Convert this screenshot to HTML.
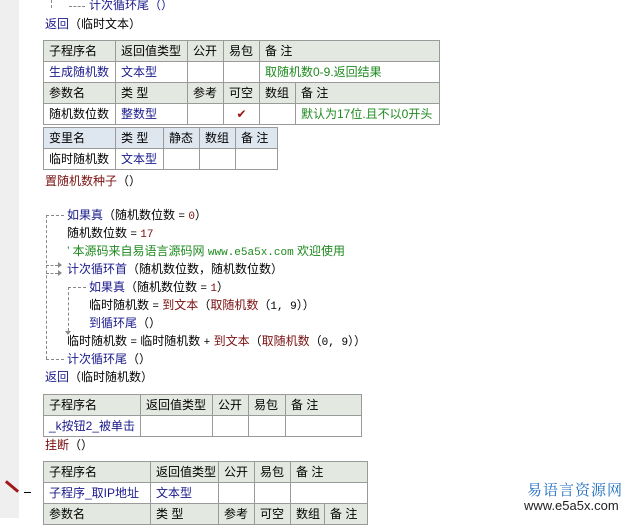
<!DOCTYPE html>
<html><head><meta charset="utf-8"><style>
body{margin:0;width:643px;height:518px;overflow:hidden;background:#fff;position:relative;font-family:"Liberation Sans","Noto Sans CJK SC",sans-serif;font-size:12px;color:#000}
.g{position:absolute;left:0;top:0;width:19px;height:518px;background:#efefef}
.t{position:absolute;white-space:nowrap;line-height:18px}
table{position:absolute;border-collapse:collapse;table-layout:fixed}
td{border:1px solid #9a9a9a;height:20px;padding:0 0 0 5px;white-space:nowrap;overflow:hidden;line-height:19px}
tr.h td{background:#e3e8e0}
tr.v td{background:#dee6ef}
.b{color:#1a1a8c}.gr{color:#1e8a1e}.r{color:#7a1010}.m{font-family:"Liberation Mono",monospace;font-size:11px}
.dv{position:absolute;border-left:1px dashed #888}
.dh{position:absolute;border-top:1px dashed #888}
</style></head><body>
<div class="g"></div>
<div class="dv" style="left:51px;top:0;height:8px"></div>
<div class="dh" style="left:69px;top:6px;width:16px"></div>
<div class="t b" style="left:89px;top:-4px">计次循环尾（）</div>
<div class="t" style="left:45px;top:15px"><span class="b">返回</span>（临时文本）</div>

<table style="left:43px;top:40px;width:397px">
<colgroup><col style="width:72px"><col style="width:72px"><col style="width:36px"><col style="width:36px"><col style="width:36px"><col></colgroup>
<tr class="h"><td>子程序名</td><td>返回值类型</td><td>公开</td><td>易包</td><td colspan="2">备 注</td></tr>
<tr><td class="b">生成随机数</td><td class="b">文本型</td><td></td><td></td><td colspan="2" class="gr">取随机数0-9.返回结果</td></tr>
<tr class="h"><td>参数名</td><td>类 型</td><td>参考</td><td>可空</td><td>数组</td><td>备 注</td></tr>
<tr><td>随机数位数</td><td class="b">整数型</td><td></td><td style="color:#a01010;text-align:center;padding:0">✔</td><td></td><td class="gr">默认为17位.且不以0开头</td></tr>
</table>

<table style="left:43px;top:127px;width:235px">
<colgroup><col style="width:72px"><col style="width:48px"><col style="width:36px"><col style="width:36px"><col></colgroup>
<tr class="v"><td>变里名</td><td>类 型</td><td>静态</td><td>数组</td><td>备 注</td></tr>
<tr><td>临时随机数</td><td class="b">文本型</td><td></td><td></td><td></td></tr>
</table>
<div class="t r" style="left:45px;top:172px">置随机数种子<span style="color:#000">（）</span></div>

<div class="dv" style="left:46px;top:215px;height:144px"></div>
<div class="dh" style="left:46px;top:215px;width:18px"></div>
<div class="dh" style="left:46px;top:359px;width:18px"></div>
<div class="dh" style="left:46px;top:265px;width:12px"></div>
<div class="dh" style="left:46px;top:273px;width:12px"></div>
<div style="position:absolute;left:58px;top:262px;border-left:4px solid #888;border-top:3px solid transparent;border-bottom:3px solid transparent"></div>
<div style="position:absolute;left:58px;top:270px;border-left:4px solid #888;border-top:3px solid transparent;border-bottom:3px solid transparent"></div>
<div class="dv" style="left:68px;top:287px;height:44px"></div>
<div class="dh" style="left:68px;top:287px;width:18px"></div>
<div style="position:absolute;left:65px;top:331px;border-top:4px solid #888;border-left:3px solid transparent;border-right:3px solid transparent"></div>

<div class="t" style="left:67px;top:206px"><span class="b">如果真</span>（随机数位数 <span class="m">=</span> <span class="m r">0</span>）</div>
<div class="t" style="left:67px;top:224px">随机数位数 <span class="m">=</span> <span class="m r">17</span></div>
<div class="t gr" style="left:67px;top:242px">’ 本源码来自易语言源码网 <span class="m">www.e5a5x.com</span>  欢迎使用</div>
<div class="t" style="left:67px;top:260px"><span class="b">计次循环首</span>（随机数位数，随机数位数）</div>
<div class="t" style="left:89px;top:278px"><span class="b">如果真</span>（随机数位数 <span class="m">=</span> <span class="m r">1</span>）</div>
<div class="t" style="left:89px;top:296px">临时随机数 <span class="m">=</span> <span class="r">到文本</span>（<span class="r">取随机数</span>（<span class="m">1, 9</span>））</div>
<div class="t b" style="left:89px;top:314px">到循环尾<span style="color:#000">（）</span></div>
<div class="t" style="left:67px;top:332px">临时随机数 <span class="m">=</span> 临时随机数 <span class="m">+</span> <span class="r">到文本</span>（<span class="r">取随机数</span>（<span class="m">0, 9</span>））</div>
<div class="t b" style="left:67px;top:350px">计次循环尾<span style="color:#000">（）</span></div>
<div class="t" style="left:45px;top:368px"><span class="b">返回</span>（临时随机数）</div>

<table style="left:43px;top:394px;width:319px">
<colgroup><col style="width:97px"><col style="width:72px"><col style="width:36px"><col style="width:37px"><col></colgroup>
<tr class="h"><td>子程序名</td><td>返回值类型</td><td>公开</td><td>易包</td><td>备 注</td></tr>
<tr><td class="b">_k按钮2_被单击</td><td></td><td></td><td></td><td></td></tr>
</table>
<div class="t r" style="left:45px;top:436px">挂断<span style="color:#000">（）</span></div>

<div style="position:absolute;left:4px;top:485px;width:16px;height:3px;background:#a01818;transform:rotate(40deg)"></div>
<div style="position:absolute;left:24px;top:492px;width:7px;height:1px;background:#000"></div>
<table style="left:43px;top:461px;width:325px">
<colgroup><col style="width:107px"><col style="width:68px"><col style="width:36px"><col style="width:36px"><col style="width:34px"><col></colgroup>
<tr class="h"><td>子程序名</td><td>返回值类型</td><td>公开</td><td>易包</td><td colspan="2">备 注</td></tr>
<tr><td class="b" style="border-left:1px solid #9a9a9a">子程序_取IP地址</td><td class="b">文本型</td><td></td><td></td><td colspan="2"></td></tr>
<tr class="h"><td>参数名</td><td>类 型</td><td>参考</td><td>可空</td><td>数组</td><td>备 注</td></tr>
</table>

<div class="t" style="left:527px;top:481px;font-size:15px;color:#1f6fc0;letter-spacing:1px;font-family:'Noto Serif CJK SC',serif">易语言资源网</div>
<div class="t" style="left:524px;top:497px;font-size:13px;color:#222;font-family:'Liberation Sans',sans-serif">www.e5a5x.com</div>
</body></html>
